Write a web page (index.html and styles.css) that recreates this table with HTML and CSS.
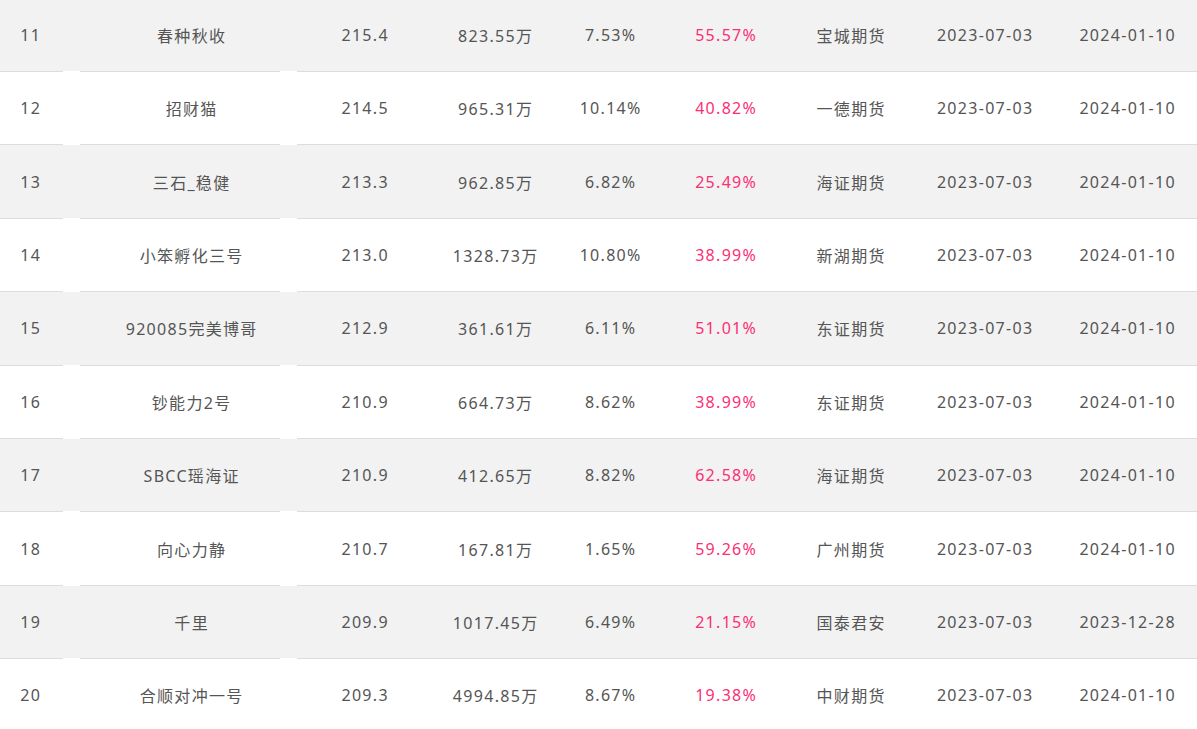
FILE: index.html
```html
<!DOCTYPE html>
<html lang="zh">
<head>
<meta charset="utf-8">
<link rel="stylesheet" href="styles.css">
</head>
<body>
<div class="table">
  <div class="row odd"><div class="c">11</div><div class="c">春种秋收</div><div class="c">215.4</div><div class="c">823.55万</div><div class="c">7.53%</div><div class="c pink">55.57%</div><div class="c">宝城期货</div><div class="c">2023-07-03</div><div class="c last">2024-01-10</div></div>
  <div class="rule"></div>
  <div class="row"><div class="c">12</div><div class="c">招财猫</div><div class="c">214.5</div><div class="c">965.31万</div><div class="c">10.14%</div><div class="c pink">40.82%</div><div class="c">一德期货</div><div class="c">2023-07-03</div><div class="c last">2024-01-10</div></div>
  <div class="rule"></div>
  <div class="row odd"><div class="c">13</div><div class="c">三石_稳健</div><div class="c">213.3</div><div class="c">962.85万</div><div class="c">6.82%</div><div class="c pink">25.49%</div><div class="c">海证期货</div><div class="c">2023-07-03</div><div class="c last">2024-01-10</div></div>
  <div class="rule"></div>
  <div class="row"><div class="c">14</div><div class="c">小笨孵化三号</div><div class="c">213.0</div><div class="c">1328.73万</div><div class="c">10.80%</div><div class="c pink">38.99%</div><div class="c">新湖期货</div><div class="c">2023-07-03</div><div class="c last">2024-01-10</div></div>
  <div class="rule"></div>
  <div class="row odd"><div class="c">15</div><div class="c">920085完美博哥</div><div class="c">212.9</div><div class="c">361.61万</div><div class="c">6.11%</div><div class="c pink">51.01%</div><div class="c">东证期货</div><div class="c">2023-07-03</div><div class="c last">2024-01-10</div></div>
  <div class="rule"></div>
  <div class="row"><div class="c">16</div><div class="c">钞能力2号</div><div class="c">210.9</div><div class="c">664.73万</div><div class="c">8.62%</div><div class="c pink">38.99%</div><div class="c">东证期货</div><div class="c">2023-07-03</div><div class="c last">2024-01-10</div></div>
  <div class="rule"></div>
  <div class="row odd"><div class="c">17</div><div class="c">SBCC瑶海证</div><div class="c">210.9</div><div class="c">412.65万</div><div class="c">8.82%</div><div class="c pink">62.58%</div><div class="c">海证期货</div><div class="c">2023-07-03</div><div class="c last">2024-01-10</div></div>
  <div class="rule"></div>
  <div class="row"><div class="c">18</div><div class="c">向心力静</div><div class="c">210.7</div><div class="c">167.81万</div><div class="c">1.65%</div><div class="c pink">59.26%</div><div class="c">广州期货</div><div class="c">2023-07-03</div><div class="c last">2024-01-10</div></div>
  <div class="rule"></div>
  <div class="row odd"><div class="c">19</div><div class="c">千里</div><div class="c">209.9</div><div class="c">1017.45万</div><div class="c">6.49%</div><div class="c pink">21.15%</div><div class="c">国泰君安</div><div class="c">2023-07-03</div><div class="c last">2023-12-28</div></div>
  <div class="rule"></div>
  <div class="row"><div class="c">20</div><div class="c">合顺对冲一号</div><div class="c">209.3</div><div class="c">4994.85万</div><div class="c">8.67%</div><div class="c pink">19.38%</div><div class="c">中财期货</div><div class="c">2023-07-03</div><div class="c last">2024-01-10</div></div>
  <div class="rule"></div>
</div>
</body>
</html>
```
FILE: styles.css
```css
html, body {
  margin: 0;
  padding: 0;
  background: #ffffff;
  overflow: hidden;
}
.table {
  margin-top: -1.4px;
  width: 1197px;
  font-family: "Noto Sans", "Noto Sans CJK SC", sans-serif;
  font-size: 16px;
  letter-spacing: 1.3px;
  color: #555555;
}
.row {
  display: grid;
  grid-template-columns: 60px 262px 85px 176px 54px 177px 73px 195px 115px;
  height: 72.4px;
  background: #ffffff;
}
.row.odd {
  background: #f2f2f2;
}
.c {
  display: flex;
  align-items: center;
  justify-content: center;
  white-space: nowrap;
  padding-left: 1.3px;
}
.c.last {
  padding-right: 25px;
}
.pink {
  color: #fb2f74;
}
.rule {
  height: 1px;
  background: linear-gradient(to right, #dcdce2 0 63px, #ffffff 63px 80px, #dcdce2 80px 280px, #ffffff 280px 297px, #dcdce2 297px);
}
```
